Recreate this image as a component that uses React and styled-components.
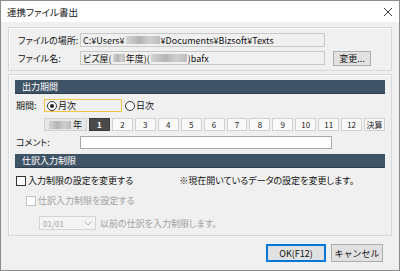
import React, { useState } from 'react';
import styled, { createGlobalStyle } from 'styled-components';

const JP = '"Noto Sans CJK JP", "Noto Sans", sans-serif';

const GlobalStyle = createGlobalStyle`
  html, body {
    margin: 0;
    padding: 0;
    background: #f0f0f0;
  }
  * {
    box-sizing: border-box;
  }
`;

const Window = styled.div`
  width: 400px;
  height: 271px;
  border: 1px solid #8c8c8c;
  background: #f0f0f0;
  display: flex;
  flex-direction: column;
  font-family: ${JP};
  font-size: 9px;
  font-feature-settings: 'palt';
  color: #111;
`;

const TitleBar = styled.div`
  height: 21px;
  background: #fff;
  display: flex;
  align-items: center;
  justify-content: space-between;
  padding: 0 6px 0 6px;
  font-size: 9.5px;
  flex-shrink: 0;
`;

const Body = styled.div`
  padding: 5px 7px 0 7px;
  display: flex;
  flex-direction: column;
`;

const GroupBox = styled.div`
  border: 1px solid #d7d7d7;
  box-shadow: inset 1px 1px 0 #fbfbfb;
  padding: ${(p) => p.$pad};
  margin-top: ${(p) => p.$mt || 0}px;
  display: flex;
  flex-direction: column;
`;

const Row = styled.div`
  display: flex;
  align-items: center;
  height: ${(p) => p.$h || 14}px;
  margin-top: ${(p) => p.$mt || 0}px;
  padding-left: ${(p) => p.$pl || 0}px;
`;

const Label = styled.span`
  width: ${(p) => p.$w}px;
  flex-shrink: 0;
  white-space: nowrap;
`;

const Field = styled.div`
  width: ${(p) => p.$w}px;
  height: 100%;
  background: ${(p) => (p.$white ? '#fff' : '#f0f0f0')};
  border: 1px solid ${(p) => (p.$white ? '#a8a8a8' : '#c8c8c8')};
  display: flex;
  align-items: center;
  padding-left: 2px;
  white-space: nowrap;
  overflow: hidden;
`;

const Blur = styled.span`
  display: inline-block;
  width: ${(p) => p.$w}px;
  height: 8px;
  margin: 0 ${(p) => p.$m || 1}px;
  background: linear-gradient(90deg, #d4d4d4, #b4b4b4 40%, #cfcfcf 70%, #bcbcbc);
  filter: blur(0.6px);
`;

const SmallButton = styled.button`
  margin-left: 8px;
  width: 38px;
  height: 15px;
  padding: 0;
  border: 1px solid #adadad;
  background: #e1e1e1;
  font-family: ${JP};
  font-size: 9px;
  color: #111;
`;

const SectionHeader = styled.div`
  height: 14px;
  background: #3f5366;
  border-bottom: 1px solid #2e3e4d;
  color: #fff;
  display: flex;
  align-items: center;
  padding-left: 7px;
  margin-top: ${(p) => p.$mt || 0}px;
`;

const RadioFrame = styled.div`
  width: 78px;
  height: 100%;
  border: 1px solid #f2c446;
  display: flex;
  align-items: center;
  padding-left: 2px;
`;

const RadioItem = styled.span`
  display: inline-flex;
  align-items: center;
  gap: 1px;
  margin-left: ${(p) => p.$ml || 0}px;
`;

const RadioCircle = styled.span`
  width: 10px;
  height: 10px;
  border-radius: 50%;
  border: 1px solid #333;
  background: #fff;
  display: inline-flex;
  align-items: center;
  justify-content: center;
  &::after {
    content: '';
    width: 4px;
    height: 4px;
    border-radius: 50%;
    background: ${(p) => (p.$checked ? '#222' : 'transparent')};
  }
`;

const MonthStrip = styled.div`
  display: flex;
  flex: 1;
  gap: 2px;
  height: 100%;
`;

const YearCell = styled.div`
  width: 43px;
  height: 100%;
  background: #e6e6e6;
  border: 1px solid #d0d0d0;
  display: flex;
  align-items: center;
  padding-left: 2px;
  margin-right: 2px;
`;

const MonthCell = styled.div`
  flex: 1;
  height: 100%;
  display: flex;
  align-items: center;
  justify-content: center;
  font-size: 8px;
  background: ${(p) => (p.$active ? '#4a4a4a' : '#f9f9f9')};
  color: ${(p) => (p.$active ? '#fff' : '#222')};
  border: 1px solid ${(p) => (p.$active ? '#3a3a3a' : '#cfcfcf')};
  font-weight: ${(p) => (p.$active ? 700 : 400)};
  white-space: nowrap;
`;

const CheckBox = styled.span`
  width: 10px;
  height: 10px;
  border: 1px solid ${(p) => (p.$disabled ? '#c4c4c4' : '#333')};
  background: #fff;
  margin-right: 2px;
  flex-shrink: 0;
`;

const Note = styled.span`
  margin-left: 46px;
  white-space: nowrap;
`;

const Disabled = styled.span`
  color: #a0a0a0;
  white-space: nowrap;
`;

const Combo = styled.div`
  width: 57px;
  height: 100%;
  border: 1px solid #d4d4d4;
  background: #f4f4f4;
  display: flex;
  align-items: center;
  justify-content: space-between;
  padding: 0 3px 0 3px;
  color: #a0a0a0;
  font-size: 8px;
  margin-right: 4px;
`;

const Footer = styled.div`
  display: flex;
  justify-content: flex-end;
  gap: 5px;
  padding: 8px 16px 0 0;
`;

const DialogButton = styled.button`
  width: ${(p) => p.$w}px;
  height: 18px;
  padding: 0;
  font-family: ${JP};
  font-size: 9px;
  color: #111;
  background: #e1e1e1;
  border: ${(p) => (p.$primary ? '2px solid #0078d7' : '1px solid #adadad')};
`;

const months = ['1', '2', '3', '4', '5', '6', '7', '8', '9', '10', '11', '12', '決算'];

export default function App() {
  const [period, setPeriod] = useState('month');
  const [month, setMonth] = useState('1');

  return (
    <>
      <GlobalStyle />
      <Window>
        <TitleBar>
          <span>連携ファイル書出</span>
          <svg width="10" height="10" viewBox="0 0 10 10">
            <path d="M1 1 L9 9 M9 1 L1 9" stroke="#222" strokeWidth="0.9" />
          </svg>
        </TitleBar>
        <Body>
          <GroupBox $pad="5px 0 5px 9px">
            <Row>
              <Label $w={62}>ファイルの場所:</Label>
              <Field $w={245}>
                C:¥Users¥<Blur $w={34} />¥Documents¥Bizsoft¥Texts
              </Field>
            </Row>
            <Row $mt={4}>
              <Label $w={62}>ファイル名:</Label>
              <Field $w={245}>
                ビズ屋(<Blur $w={12} />年度)(<Blur $w={36} />)bafx
              </Field>
              <SmallButton>変更...</SmallButton>
            </Row>
          </GroupBox>

          <GroupBox $pad="5px 6px 5px 6px" $mt={3}>
            <SectionHeader>出力期間</SectionHeader>
            <Row $h={13} $mt={5} $pl={1}>
              <Label $w={28}>期間:</Label>
              <RadioFrame>
                <RadioItem onClick={() => setPeriod('month')}>
                  <RadioCircle $checked={period === 'month'} />
                  月次
                </RadioItem>
              </RadioFrame>
              <RadioItem $ml={3} onClick={() => setPeriod('day')}>
                <RadioCircle $checked={period === 'day'} />
                日次
              </RadioItem>
            </Row>
            <Row $h={13} $mt={6} $pl={29}>
              <YearCell>
                <Blur $w={22} $m={2} />年
              </YearCell>
              <MonthStrip>
                {months.map((m) => (
                  <MonthCell key={m} $active={m === month} onClick={() => setMonth(m)}>
                    {m}
                  </MonthCell>
                ))}
              </MonthStrip>
            </Row>
            <Row $h={13} $mt={5} $pl={1}>
              <Label $w={64}>コメント:</Label>
              <Field $w={252} $white />
            </Row>
            <SectionHeader $mt={5}>仕訳入力制限</SectionHeader>
            <Row $h={13} $mt={6} $pl={1}>
              <CheckBox />
              <span>入力制限の設定を変更する</span>
              <Note>※現在開いているデータの設定を変更します。</Note>
            </Row>
            <Row $h={13} $mt={7} $pl={11}>
              <CheckBox $disabled />
              <Disabled>仕訳入力制限を設定する</Disabled>
            </Row>
            <Row $h={14} $mt={9} $pl={24}>
              <Combo>
                <span>01/01</span>
                <svg width="8" height="5" viewBox="0 0 8 5">
                  <path d="M0.5 0.5 L4 4 L7.5 0.5" stroke="#b0b0b0" fill="none" strokeWidth="1" />
                </svg>
              </Combo>
              <Disabled>以前の仕訳を入力制限します。</Disabled>
            </Row>
          </GroupBox>
        </Body>
        <Footer>
          <DialogButton $w={60} $primary>OK(F12)</DialogButton>
          <DialogButton $w={52}>キャンセル</DialogButton>
        </Footer>
      </Window>
    </>
  );
}
